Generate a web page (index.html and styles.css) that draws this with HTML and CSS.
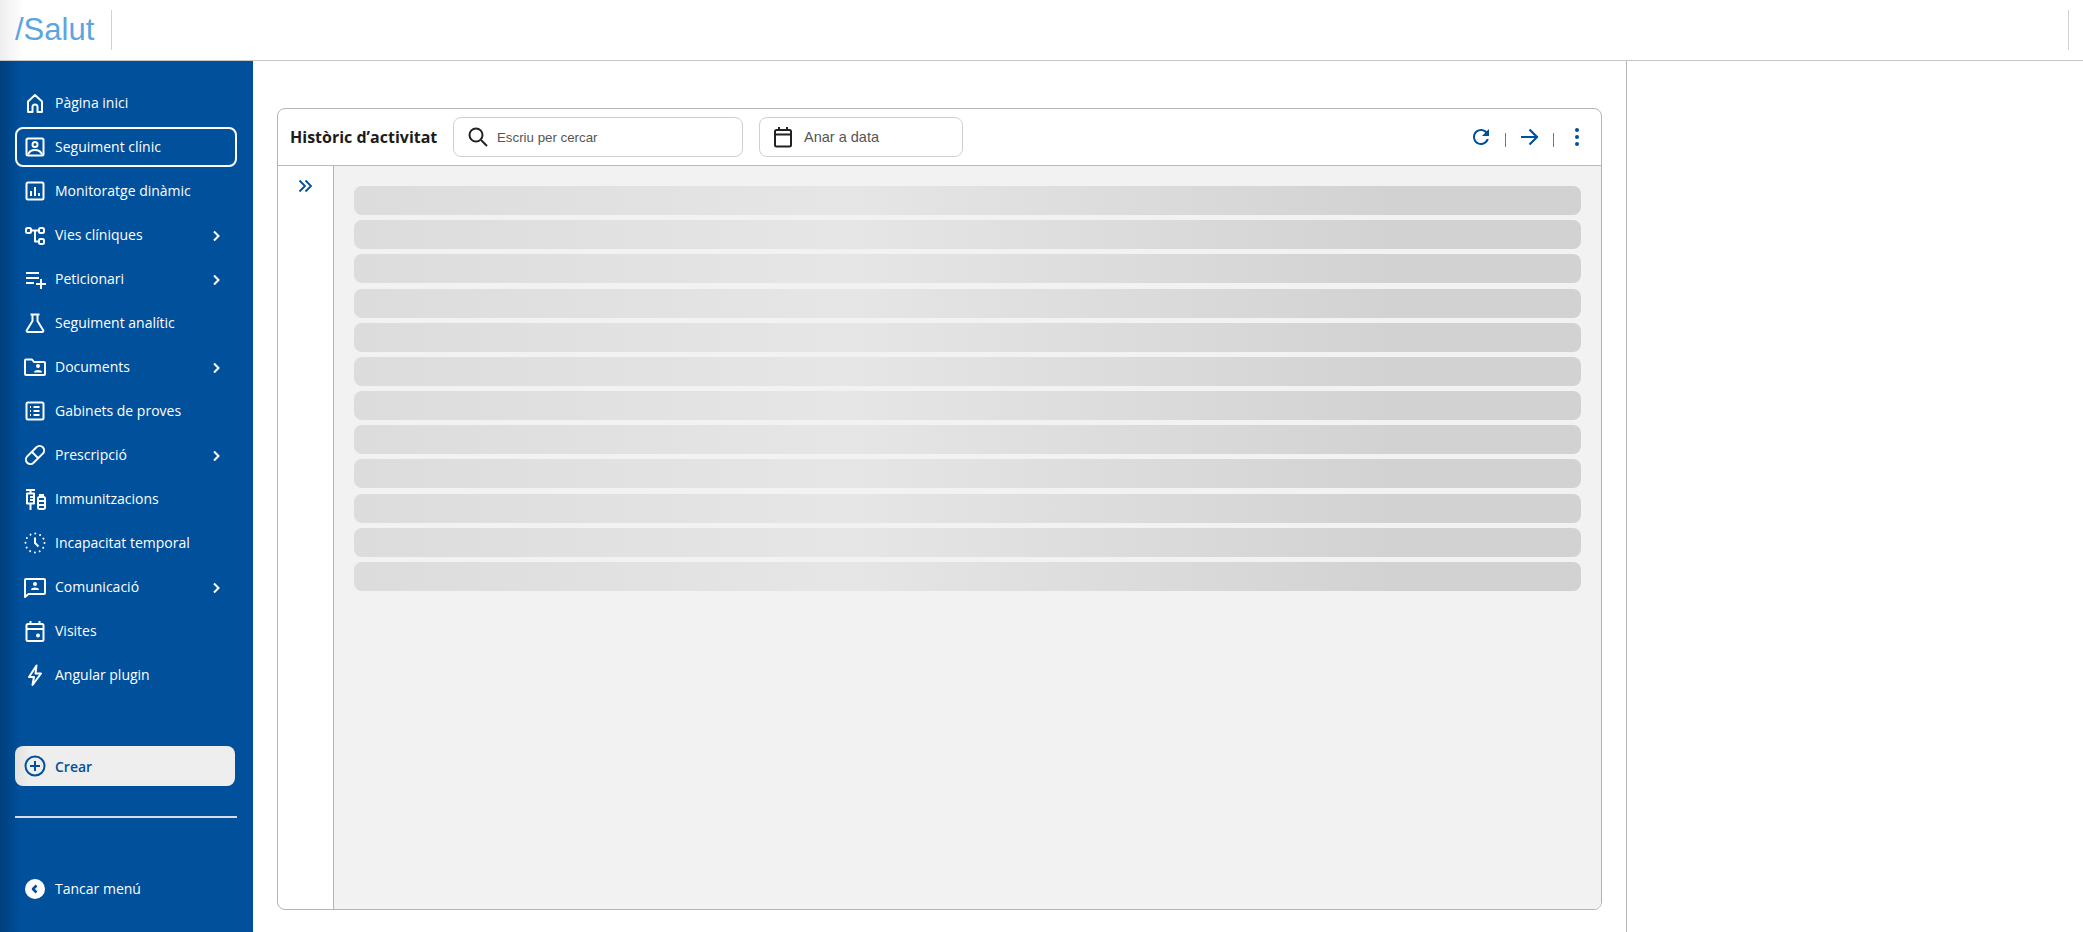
FILE: index.html
```html
<!DOCTYPE html>
<html lang="ca">
<head>
<meta charset="utf-8">
<title>Salut</title>
<link rel="stylesheet" href="styles.css">
</head>
<body>
<header class="topbar">
  <div class="brand">/Salut</div>
  <div class="topbar-end"></div>
</header>
<div class="shell">
  <nav class="sidebar">
    <ul class="menu">
      <li class="item"><svg class="ico" viewBox="0 0 24 24"><path d="M5 21V10.500L12 4l7 6.500V21h-4.500v-5a2.500 2.500 0 0 0-5 0v5z"/></svg><span>Pàgina inici</span></li>
      <li class="item active"><svg class="ico" viewBox="0 0 24 24"><rect x="3.500" y="3.500" width="17" height="17" rx="1.500"/><circle cx="12" cy="9.500" r="2.500"/><path d="M5 19.500c1-3 3.500-4.500 7-4.500s6 1.500 7 4.500"/></svg><span>Seguiment clínic</span></li>
      <li class="item"><svg class="ico" viewBox="0 0 24 24"><rect x="3.500" y="3.500" width="17" height="17" rx="1.500"/><path d="M8 17v-5M12 17V8M16 17v-3"/></svg><span>Monitoratge dinàmic</span></li>
      <li class="item"><svg class="ico" viewBox="0 0 24 24"><rect x="3" y="5" width="5" height="5" rx="1.500"/><rect x="16" y="5" width="5" height="5" rx="1.500"/><rect x="16" y="16" width="5" height="5" rx="1.500"/><path d="M8 7.500h8M12 7.500v11h4"/></svg><span>Vies clíniques</span><svg class="chev" viewBox="0 0 12 12"><path d="M4 1.500 8.500 6 4 10.500"/></svg></li>
      <li class="item"><svg class="ico" viewBox="0 0 24 24"><path d="M3 6h13M3 11h13M3 16h8M18 12v10M13 17h10"/></svg><span>Peticionari</span><svg class="chev" viewBox="0 0 12 12"><path d="M4 1.500 8.500 6 4 10.500"/></svg></li>
      <li class="item"><svg class="ico" viewBox="0 0 24 24"><path d="M7.500 3.500h9M9.500 3.500v6.500L3.800 19.200c-.6 1 .1 1.800 1.200 1.800h14c1.100 0 1.800-.8 1.200-1.800L14.500 10V3.500"/></svg><span>Seguiment analític</span></li>
      <li class="item"><svg class="ico" viewBox="0 0 24 24"><path d="M2 5.500c0-.6.4-1 1-1h6l2 2.500h10c.6 0 1 .4 1 1V19c0 .6-.4 1-1 1H3c-.6 0-1-.4-1-1z"/><circle class="solid" cx="15" cy="11" r="2"/><path class="solid" d="M11 17.500c0-1.800 2-2.500 4-2.500s4 .7 4 2.500z"/></svg><span>Documents</span><svg class="chev" viewBox="0 0 12 12"><path d="M4 1.500 8.500 6 4 10.500"/></svg></li>
      <li class="item"><svg class="ico" viewBox="0 0 24 24"><rect x="3.500" y="3.500" width="17" height="17" rx="1.500"/><path d="M10.500 8h6M10.500 12h6M10.500 16h6M7 8h1M7 12h1M7 16h1"/></svg><span>Gabinets de proves</span></li>
      <li class="item"><svg class="ico" viewBox="0 0 24 24"><rect x="1" y="7.500" width="22" height="9" rx="4.500" transform="rotate(-45 12 12)"/><path d="M8.500 8.500l7 7"/></svg><span>Prescripció</span><svg class="chev" viewBox="0 0 12 12"><path d="M4 1.500 8.500 6 4 10.500"/></svg></li>
      <li class="item"><svg class="ico" viewBox="0 0 24 24"><path d="M3 3h9M7.500 3v3M4 6.500h7v10H4zM7.500 16.500V23M7 10h4M7 13h4M16 8h5M17 8v2M20 10v0M15 11.500c0-.8.500-1.500 1.500-1.500h4c1 0 1.500.7 1.500 1.500v9c0 .8-.5 1.500-1.500 1.500h-4c-1 0-1.500-.7-1.500-1.500zM15 14h7M15 18h7"/></svg><span>Immunitzacions</span></li>
      <li class="item"><svg class="ico" viewBox="0 0 24 24"><circle class="dotted" cx="12" cy="12" r="9.500"/><path d="M12 6.500V12l3.500 3.500"/></svg><span>Incapacitat temporal</span></li>
      <li class="item"><svg class="ico" viewBox="0 0 24 24"><path d="M2 5c0-.6.4-1 1-1h18c.6 0 1 .4 1 1v13c0 .6-.4 1-1 1H5.500L2 22z"/><circle class="solid" cx="12" cy="9" r="2"/><path class="solid" d="M8 15c0-1.800 2-2.500 4-2.500s4 .7 4 2.500z"/></svg><span>Comunicació</span><svg class="chev" viewBox="0 0 12 12"><path d="M4 1.500 8.500 6 4 10.500"/></svg></li>
      <li class="item"><svg class="ico" viewBox="0 0 24 24"><rect x="3.500" y="5" width="17" height="17" rx="1.500"/><path d="M3.500 10h17M7.500 2v4M16.500 2v4"/><circle class="solid" cx="15" cy="16.500" r="2"/></svg><span>Visites</span></li>
      <li class="item"><svg class="ico" viewBox="0 0 24 24"><path d="M13.500 2.500 6 14h5l-1.500 8L18 10.500h-5.500z"/></svg><span>Angular plugin</span></li>
    </ul>
    <button class="create" type="button"><svg class="ico" viewBox="0 0 24 24"><circle cx="12" cy="12" r="9.500"/><path d="M12 7v10M7 12h10"/></svg><span>Crear</span></button>
    <hr class="rule">
    <div class="item close"><svg class="ico" viewBox="0 0 24 24"><circle class="solid" cx="12" cy="12" r="10"/><path class="back" d="M13.500 8.500 10 12l3.500 3.500"/></svg><span>Tancar menú</span></div>
  </nav>
  <main class="content">
    <section class="card">
      <div class="toolbar">
        <h1 class="title">Històric d’activitat</h1>
        <label class="field search"><svg class="field-ico" viewBox="0 0 24 24"><circle cx="10" cy="10" r="6.500"/><path d="m15 15 6 6"/></svg><span>Escriu per cercar</span></label>
        <div class="field date"><svg class="field-ico" viewBox="0 0 24 24"><rect x="4" y="5" width="16" height="16.500" rx="1.500"/><path d="M4 9.500h16M8 2v4M16 2v4"/></svg><span>Anar a data</span></div>
        <div class="actions">
          <svg class="act filled" viewBox="0 0 24 24"><path d="M17.650 6.350C16.200 4.900 14.210 4 12 4c-4.420 0-7.990 3.580-7.990 8s3.570 8 7.990 8c3.730 0 6.840-2.550 7.730-6h-2.080c-.82 2.330-3.040 4-5.650 4-3.310 0-6-2.690-6-6s2.690-6 6-6c1.660 0 3.140.69 4.220 1.780L13 11h7V4l-2.350 2.350z"/></svg>
          <i class="sep"></i>
          <svg class="act" viewBox="0 0 24 24"><path d="M4 12h16M12.500 4.500 20 12l-7.500 7.500"/></svg>
          <i class="sep"></i>
          <svg class="act filled" viewBox="0 0 24 24"><circle cx="12" cy="5" r="2"/><circle cx="12" cy="12" r="2"/><circle cx="12" cy="19" r="2"/></svg>
        </div>
      </div>
      <div class="body">
        <aside class="rail"><svg class="expand" viewBox="0 0 16 16"><path d="M2.500 2.500 8 8l-5.500 5.500M8.500 2.500 14 8l-5.500 5.500"/></svg></aside>
        <div class="list">
          <div class="bar"></div><div class="bar"></div><div class="bar"></div><div class="bar"></div>
          <div class="bar"></div><div class="bar"></div><div class="bar"></div><div class="bar"></div>
          <div class="bar"></div><div class="bar"></div><div class="bar"></div><div class="bar"></div>
        </div>
      </div>
    </section>
  </main>
  <div class="panel"></div>
</div>
</body>
</html>
```
FILE: styles.css
```css
* { box-sizing: border-box; }
html, body { margin: 0; height: 100%; }
body {
  overflow: hidden;
  background: #fff;
  font-family: "Open Sans", "Liberation Sans", sans-serif;
  display: flex;
  flex-direction: column;
}
.topbar {
  flex: 0 0 61px;
  display: flex;
  align-items: center;
  justify-content: space-between;
  border-bottom: 1px solid #c6c6c6;
  background: linear-gradient(90deg, #eeeeee 0, #ffffff 24px);
  padding-bottom: 1px;
}
.brand {
  width: 112px;
  height: 40px;
  padding-left: 15px;
  border-right: 1px solid #d2d2d2;
  font: 31px/39px "Liberation Sans", Arial, sans-serif;
  color: #5ba5e0;
}
.topbar-end {
  width: 15px;
  height: 40px;
  border-left: 1px solid #d2d2d2;
}
.shell { flex: 1; display: flex; min-height: 0; }
.sidebar {
  flex: 0 0 253px;
  display: flex;
  flex-direction: column;
  padding: 22px 16px 23px 15px;
  background: linear-gradient(90deg, #003f7d 0, #00509c 20px);
  background-color: #00509c;
  color: #fff;
}
.menu { list-style: none; margin: 0; padding: 0; display: flex; flex-direction: column; gap: 4px; }
.item {
  position: relative;
  height: 40px;
  display: flex;
  align-items: center;
  gap: 8px;
  padding: 0 8px;
  border: 2px solid transparent;
  border-radius: 8px;
  font-size: 14px;
  font-weight: 500;
  white-space: nowrap;
}
.item span { padding-bottom: 2px; }
.active { border-color: #fff; }
.ico {
  flex: 0 0 24px;
  margin-left: -2px;
  width: 24px;
  height: 24px;
  fill: none;
  stroke: currentColor;
  stroke-width: 2;
  stroke-linejoin: round;
}
.ico .solid { fill: currentColor; stroke: none; }
.ico .dotted { stroke-dasharray: 0.010 4.965; stroke-linecap: round; }
.ico .back { stroke: #00509c; stroke-width: 2.500; }
.chev {
  position: absolute;
  right: 13px;
  top: 50%;
  width: 12px;
  height: 12px;
  margin-top: -5px;
  fill: none;
  stroke: #fff;
  stroke-width: 2;
}
.create {
  margin-top: 51px;
  width: 220px;
  height: 40px;
  display: flex;
  align-items: center;
  gap: 8px;
  padding: 0 10px;
  border: 0;
  border-radius: 8px;
  background: linear-gradient(90deg, #e0e0e0 0, #eeeeee 14px);
  color: #00509c;
  font: 600 14px "Open Sans", sans-serif;
}
.rule { width: 222px; margin: 30px 0 0; border: 0; border-top: 2px solid #d8dde3; }
.close { margin-top: auto; }
.content {
  flex: 0 0 1374px;
  display: flex;
  padding: 47px 24px 22px;
  border-right: 1px solid #b4b4b4;
}
.card {
  flex: 1;
  display: flex;
  flex-direction: column;
  border: 1px solid #b4b4b4;
  border-radius: 8px;
  overflow: hidden;
}
.toolbar {
  flex: 0 0 57px;
  display: flex;
  align-items: center;
  padding-left: 12px;
  border-bottom: 1px solid #b9b9b9;
}
.title {
  margin: 0 16px 0 0;
  width: 147px;
  color: #1c1c1c;
  font-size: 16px;
  font-weight: 700;
  white-space: nowrap;
}
.field {
  height: 40px;
  display: flex;
  align-items: center;
  border: 1px solid #cfcfcf;
  border-radius: 8px;
  color: #555;
  font-family: "Liberation Sans", Arial, sans-serif;
}
.search { width: 290px; padding-left: 12px; gap: 7px; font-size: 13.300px; }
.date { width: 204px; margin-left: 16px; padding-left: 11px; gap: 9px; font-size: 14.500px; }
.field-ico {
  width: 24px;
  height: 24px;
  flex: none;
  fill: none;
  stroke: #222;
  stroke-width: 2;
}
.actions {
  margin-left: auto;
  padding-right: 12px;
  display: flex;
  align-items: center;
  gap: 11.500px;
}
.act {
  width: 24px;
  height: 24px;
  fill: none;
  stroke: #00509c;
  stroke-width: 2.200;
}
.act.filled { fill: #00509c; stroke: none; }
.sep { width: 1px; height: 14px; margin-top: 5px; background: #777; }
.body { flex: 1; display: flex; min-height: 0; }
.rail {
  flex: 0 0 56px;
  display: flex;
  justify-content: center;
  padding: 12px 2px 0 0;
  border-right: 1px solid #b4b4b4;
}
.expand {
  width: 16px;
  height: 16px;
  fill: none;
  stroke: #00509c;
  stroke-width: 1.800;
}
.list {
  flex: 1;
  display: flex;
  flex-direction: column;
  gap: 5.180px;
  padding: 20px 20px 0;
  background: #f2f2f2;
}
.bar {
  flex: 0 0 29px;
  border-radius: 8px;
  background: linear-gradient(90deg, #dcdcdc 0, #e6e6e6 40%, #d2d2d2 85%, #d2d2d2 100%);
}
.panel { flex: 1; }
```
